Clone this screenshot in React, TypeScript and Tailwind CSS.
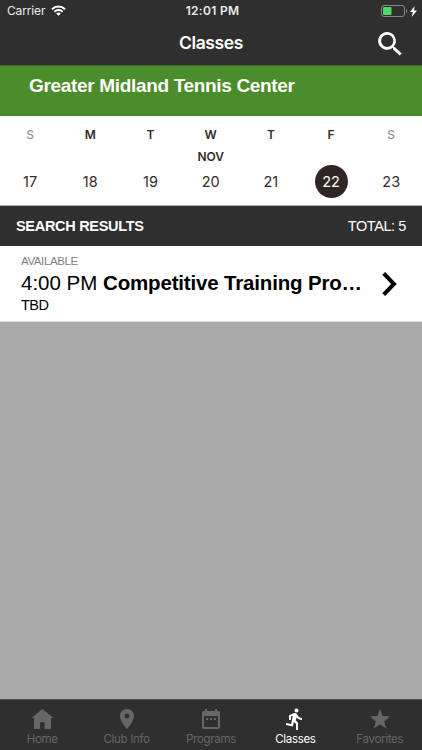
import React from 'react';

const days = [
  { letter: 'S', date: 17, weekend: true },
  { letter: 'M', date: 18 },
  { letter: 'T', date: 19 },
  { letter: 'W', date: 20, month: 'NOV' },
  { letter: 'T', date: 21 },
  { letter: 'F', date: 22, selected: true },
  { letter: 'S', date: 23, weekend: true },
];

const tabs = [
  {
    label: 'Home',
    icon: <path d="M12.4 2 1.6 11H4v11h6v-6.7h4.6V22H21V11h2.4z" />,
  },
  {
    label: 'Club Info',
    icon: <path d="M12 2C8.13 2 5 5.13 5 9c0 5.25 7 13 7 13s7-7.75 7-13c0-3.87-3.13-7-7-7zm0 9.5a2.5 2.5 0 0 1 0-5 2.5 2.5 0 0 1 0 5z" />,
  },
  {
    label: 'Programs',
    icon: <path fillRule="evenodd" d="M5 4h1V2h2v2h8V2h2v2h1a2 2 0 0 1 2 2v14a2 2 0 0 1-2 2H5a2 2 0 0 1-2-2V6a2 2 0 0 1 2-2zm0 5v11h14V9zm2 2h2v2H7zm4 0h2v2h-2zm4 0h2v2h-2z" />,
  },
  {
    label: 'Classes',
    active: true,
    icon: <path d="M13.49 5.48c1.1 0 2-.9 2-2s-.9-2-2-2-2 .9-2 2 .9 2 2 2zm-3.6 13.9 1-4.4 2.1 2v6h2v-7.5l-2.1-2 .6-3c1.3 1.5 3.3 2.5 5.5 2.5v-2c-1.9 0-3.5-1-4.3-2.4l-1-1.6c-.4-.6-1-1-1.7-1-.3 0-.5.1-.8.1l-5.2 2.2v4.7h2v-3.4l1.8-.7-1.6 8.1-4.9-1-.4 2 7 1.4z" />,
  },
  {
    label: 'Favorites',
    icon: <path d="M12 17.5 18.18 21.6l-2-7.2L22 9.3l-7.4-.3L12 1.7 9.4 9 2 9.300l5.820 5.100-2 7.200z" />,
  },
];

function StatusBar() {
  return (
    <div className="flex h-[22px] items-center pl-[7px] pr-[5px] text-[12px] text-[#ececec]">
      <div className="flex flex-1 items-center gap-[6px]">
        <span className="tracking-[-0.15px]">Carrier</span>
        <svg className="-mt-px" width="15" height="11" viewBox="0 0 15 11" fill="none" stroke="#fff" strokeWidth="2">
          <path d="M1 4.3a9.2 9.2 0 0 1 13 0" />
          <path d="M3.4 6.8a5.8 5.8 0 0 1 8.2 0" />
          <path d="M5.2 8.5a3.3 3.3 0 0 1 4.6 0L7.5 10.8z" fill="#fff" stroke="none" />
        </svg>
      </div>
      <span className="pl-[1px] font-semibold tracking-[0.3px]">12:01 PM</span>
      <div className="flex flex-1 items-center justify-end">
        <svg width="27" height="12" viewBox="0 0 27 12">
          <rect x="0.5" y="0.5" width="23" height="11" rx="2.5" fill="none" stroke="#858585" />
          <rect x="2" y="2" width="8.5" height="8" rx="1" fill="#4cd964" />
          <path d="M25 4v4q1.3-.6 1.3-2T25 4z" fill="#858585" />
        </svg>
        <svg className="ml-[2px]" width="7" height="11" viewBox="0 0 7 11" fill="#fff">
          <path d="M4.6 0 0 6h2.8L1.8 11 7 4.6H4z" />
        </svg>
      </div>
    </div>
  );
}

function TabBar() {
  return (
    <nav className="grid h-[51px] grid-cols-5 border-t border-[#555] bg-[#2f2f2f]">
      {tabs.map((tab) => (
        <button
          key={tab.label}
          className={`flex flex-col items-center pt-[7px] ${tab.active ? 'text-white' : 'text-[#666]'}`}
        >
          <svg width="24" height="24" viewBox="0 0 24 24" fill="currentColor">{tab.icon}</svg>
          <span className="text-[11.5px] leading-4 tracking-[-0.3px]">{tab.label}</span>
        </button>
      ))}
    </nav>
  );
}

export default function App() {
  return (
    <div className="flex h-[750px] w-[422px] flex-col overflow-hidden bg-[#aaa] font-[Inter,sans-serif]">
      <header className="h-[66px] border-b border-[#40672f] bg-[#2f2f2f]">
        <StatusBar />
        <div className="grid h-[43px] grid-cols-[1fr_auto_1fr] items-center px-5">
          <span />
          <h1 className="text-[17.5px] font-semibold tracking-[-0.4px] text-white">Classes</h1>
          <button className="justify-self-end text-white">
            <svg width="24" height="24" viewBox="0 0 24 24" fill="currentColor">
              <path fillRule="evenodd" d="M9.2 0a8.900 8.900 0 1 0 5.500 15.800l.4.4v1.300l6.500 6.100 2.100-2.100-6.500-6.200H15.900l-.4-.4A8.900 8.900 0 0 0 9.200 0zm0 2.800a6.100 6.100 0 1 1 0 12.200 6.100 6.100 0 0 1 0-12.200z" />
            </svg>
          </button>
        </div>
      </header>

      <div className="h-[50px] bg-[#4b8c2b] pl-[29px] pt-2 font-['Liberation_Sans',sans-serif] text-[19px] font-bold leading-6 tracking-[-0.33px] text-white">
        Greater Midland Tennis Center
      </div>

      <div className="grid h-[90px] grid-cols-[repeat(7,60.2px)] border-b border-[#b5b3b3] bg-white text-[#332c2c]">
        {days.map((day) => (
          <div key={day.date} className="flex flex-col items-center pt-[11px]">
            <span className={`text-[12px] leading-4 ${day.weekend ? 'font-medium text-[#949494]' : 'font-semibold'}`}>
              {day.letter}
            </span>
            <span className="mt-[6px] h-4 text-[12px] font-semibold leading-4 tracking-[-0.1px]">{day.month}</span>
            <span
              className={`flex size-[33px] items-center justify-center rounded-full text-[14.5px] ${day.selected ? 'bg-[#302625] text-white' : ''}`}
            >
              {day.date}
            </span>
          </div>
        ))}
      </div>

      <div className="font-['Liberation_Sans',sans-serif]">
        <div className="flex h-[40px] items-center justify-between bg-[#2f2f2f] px-4 pt-px text-[14.5px] text-white">
          <span className="font-bold tracking-[-0.3px]">SEARCH RESULTS</span>
          <span className="tracking-[-0.4px]">TOTAL: 5</span>
        </div>
        <div className="flex h-[76px] items-center border-b border-[#ddd] bg-white pl-[21px] pr-[25px] text-black">
          <div className="w-[346px] whitespace-nowrap pb-[2px]">
            <div className="text-[11.5px] leading-[14px] tracking-[-0.4px] text-[#808080]">AVAILABLE</div>
            <div className="text-[20.5px] leading-[30px]">
              4:00 PM <b className="tracking-[-0.17px]">Competitive Training Pro…</b>
            </div>
            <div className="text-[14.5px] leading-[14px] tracking-[-0.5px]">TBD</div>
          </div>
          <svg className="ml-auto" width="15" height="24" viewBox="0 0 15 24" fill="none" stroke="#000" strokeWidth="4">
            <path d="M1.7 1.4 12 12 1.7 22.6" />
          </svg>
        </div>
      </div>

      <main className="flex-1" />
      <TabBar />
    </div>
  );
}
